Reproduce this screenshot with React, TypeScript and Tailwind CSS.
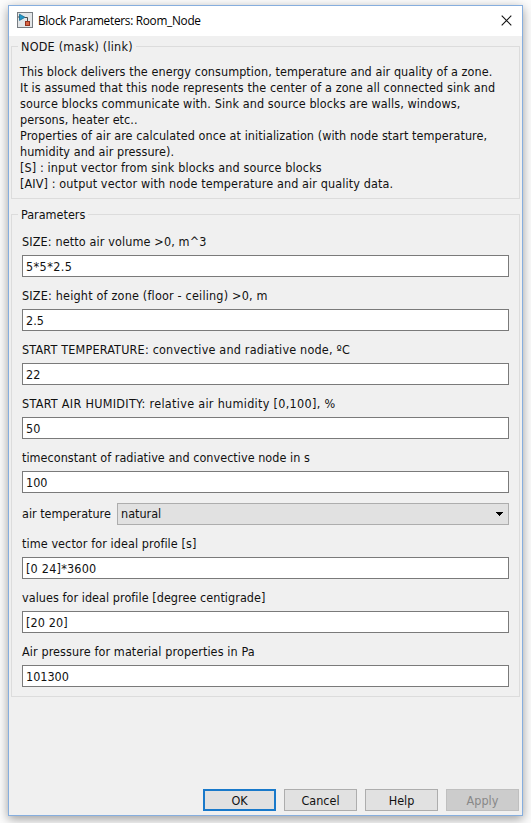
import type { ReactNode } from "react";

const description: [string, string][] = [
  ["This block delivers the energy consumption, temperature and air quality of a zone.", "tracking-[0.064px]"],
  ["It is assumed that this node represents the center of a zone all connected sink and", "tracking-[0.094px]"],
  ["source blocks communicate with. Sink and source blocks are walls, windows,", "tracking-[0.1px]"],
  ["persons, heater etc..", "tracking-[0.04px]"],
  ["Properties of air are calculated once at initialization (with node start temperature,", "tracking-[0.07px]"],
  ["humidity and air pressure).", "tracking-[0.05px]"],
  ["[S] : input vector from sink blocks and source blocks", "tracking-[0.126px]"],
  ["[AIV] : output vector with node temperature and air quality data.", "tracking-[0.12px]"],
];

function Group({ title, className, children }: { title: ReactNode; className: string; children: ReactNode }) {
  return (
    <fieldset className={`w-[509px] border border-[#dcdcdc] px-[10px] ${className}`}>
      <legend className="-ml-1 h-[17px] px-[3px] leading-[17px] whitespace-nowrap">{title}</legend>
      {children}
    </fieldset>
  );
}

function Field({
  label,
  value,
  tracking,
  valueTracking = "tracking-normal",
}: {
  label: string;
  value: string;
  tracking: string;
  valueTracking?: string;
}) {
  return (
    <label className="flex flex-col gap-[5px]">
      <span className={`h-[17px] pt-px leading-4 whitespace-nowrap ${tracking}`}>{label}</span>
      <input
        className={`h-[22px] w-full border border-[#7a7a7a] bg-white px-[3px] pt-px outline-none ${valueTracking}`}
        defaultValue={value}
      />
    </label>
  );
}

function Button({ label, look }: { label: string; look: string }) {
  return <button className={`h-[22px] w-[73px] pt-[2px] leading-none ${look}`}>{label}</button>;
}

export default function App() {
  return (
    <div className="h-[823px] w-[531px] overflow-hidden bg-[#fcfcfc] pt-[5px] pl-2 font-['DejaVu_Sans_Condensed','DejaVu_Sans',sans-serif] text-[12.5px] text-[#111] [font-stretch:condensed]">
      <div className="flex h-[811px] w-[515px] flex-col border border-[#86aede] bg-[#f0f0f0] shadow-[0_3px_10px_rgba(0,0,0,0.38)]">
        <header className="flex h-[30px] shrink-0 items-center bg-white pb-[2px] pl-2">
          <svg width="16" height="16" viewBox="0 0 16 16" shapeRendering="geometricPrecision">
            <rect x="0.5" y="0.5" width="15" height="15" fill="#e3e6e8" stroke="#777d82" />
            <path d="M1 5h2M8 5.5h2.5v4" fill="none" stroke="#4c4c4c" />
            <path d="M2.5 2.2v6.2L8 5.3z" fill="#2498c8" stroke="#17698f" strokeWidth="0.8" />
            <rect x="8.5" y="9.5" width="4" height="4" fill="#d86543" stroke="#93321f" />
          </svg>
          <h1 className="ml-[5px] grow pt-px font-['Open_Sans','Noto_Sans',sans-serif] text-[11.8px] tracking-[-0.27px] whitespace-nowrap text-black [font-stretch:normal]">
            Block Parameters: Room_Node
          </h1>
          <svg className="mr-[10px]" width="11" height="11" viewBox="0 0 11 11">
            <path d="M0.7 0.7l9.6 9.6M10.3 0.7L0.7 10.3" stroke="#111" strokeWidth="1.1" />
          </svg>
        </header>

        <main className="flex flex-col gap-[7px] pt-[2px] pl-[2px]">
          <Group title={<span className="tracking-[0.22px]">NODE (mask) (link)</span>} className="h-[161px]">
            <div className="-ml-[2px] pt-[9px] leading-4">
              {description.map(([text, tracking]) => (
                <p key={text} className={`whitespace-nowrap ${tracking}`}>{text}</p>
              ))}
            </div>
          </Group>

          <Group title="Parameters" className="h-[491px]">
            <div className="flex flex-col gap-[10px] pt-[10px]">
              <Field label="SIZE: netto air volume >0, m^3" value="5*5*2.5" tracking="tracking-[0.13px]" valueTracking="tracking-[0.4px]" />
              <Field label="SIZE: height of zone (floor - ceiling) >0, m" value="2.5" tracking="tracking-[0.19px]" />
              <Field label="START TEMPERATURE: convective and radiative node, ºC" value="22" tracking="tracking-[0.19px]" />
              <Field label="START AIR HUMIDITY: relative air humidity [0,100], %" value="50" tracking="tracking-[0.3px]" />
              <Field label="timeconstant of radiative and convective node in s" value="100" tracking="tracking-[0.03px]" />
              <div className="flex h-[22px] items-center">
                <span className="w-[95px] shrink-0 whitespace-nowrap">air temperature</span>
                <div className="flex h-[22px] grow items-center justify-between border border-[#adadad] bg-[#e1e1e1] pr-[5px] pl-[3px]">
                  <span>natural</span>
                  <svg width="8" height="4" viewBox="0 0 8 4" shapeRendering="crispEdges">
                    <path d="M0 0h8L4 4z" fill="#000" />
                  </svg>
                </div>
              </div>
              <Field label="time vector for ideal profile [s]" value="[0 24]*3600" tracking="tracking-[0.08px]" valueTracking="tracking-[0.22px]" />
              <Field label="values for ideal profile [degree centigrade]" value="[20 20]" tracking="tracking-[0.05px]" valueTracking="tracking-[0.1px]" />
              <Field label="Air pressure for material properties in Pa" value="101300" tracking="tracking-[0.1px]" />
            </div>
          </Group>
        </main>

        <footer className="mt-auto mb-1 flex justify-end gap-2 pr-[3px]">
          <Button label="OK" look="border-2 border-[#1979ca] bg-[#e1e1e1]" />
          <Button label="Cancel" look="border border-[#adadad] bg-[#e1e1e1]" />
          <Button label="Help" look="border border-[#adadad] bg-[#e1e1e1]" />
          <Button label="Apply" look="border border-[#bfbfbf] bg-[#cccccc] text-[#888]" />
        </footer>
      </div>
    </div>
  );
}
